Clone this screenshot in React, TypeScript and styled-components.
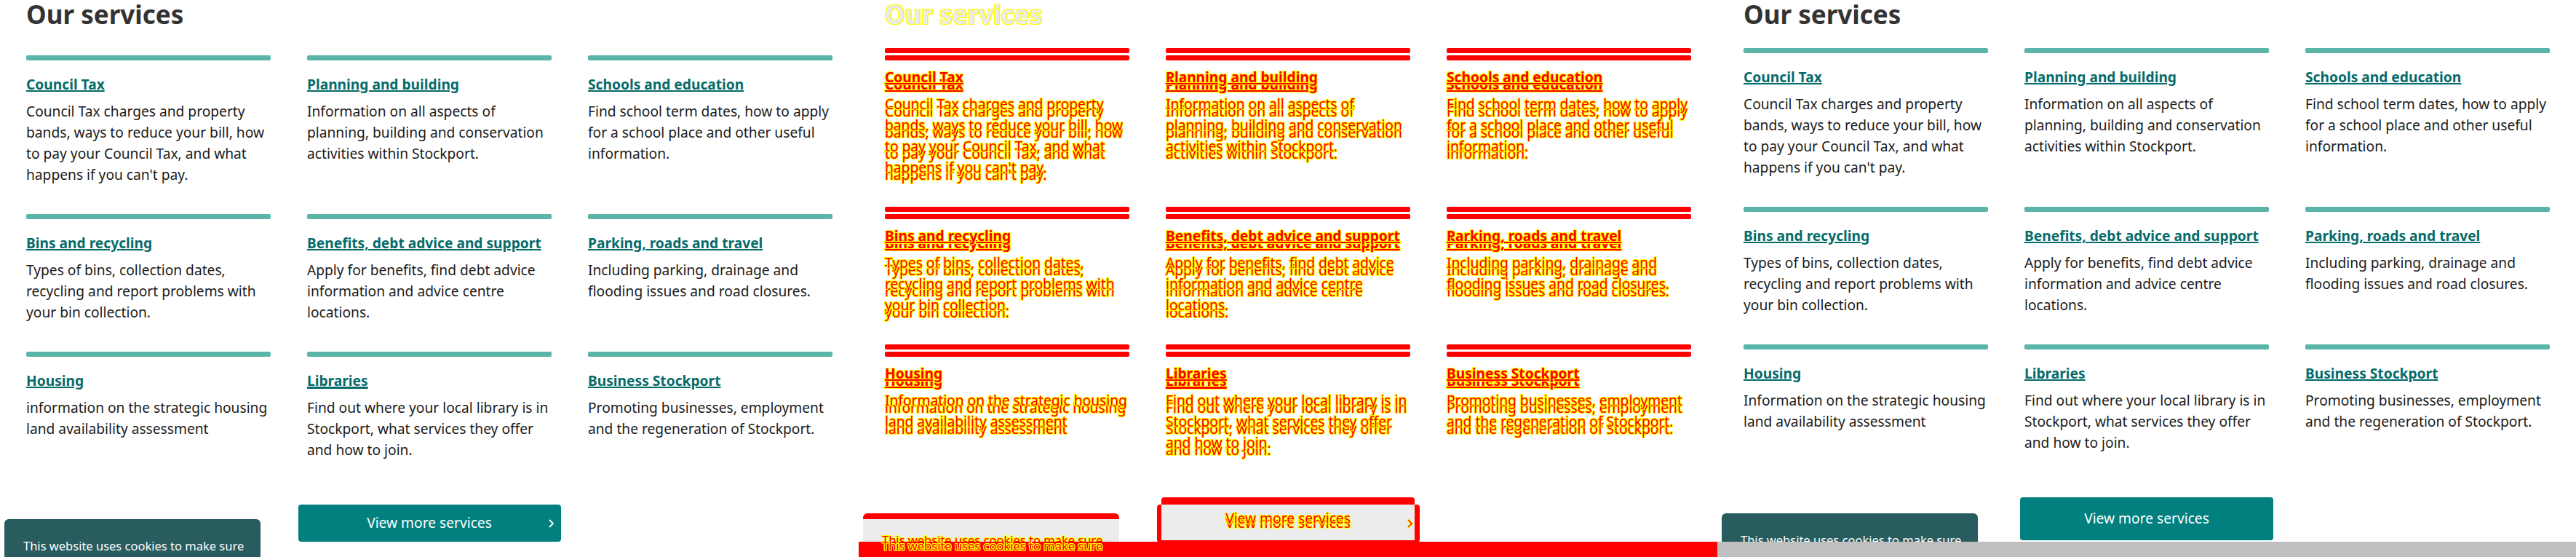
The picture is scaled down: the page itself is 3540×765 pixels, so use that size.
import styled, { createGlobalStyle, css } from "styled-components";

type Layout = "before" | "after";
type Tone = "plain" | "diff";

type Service = { title: string; text: string; hover?: boolean };

const LAYOUTS = {
  before: { gridTop: 36, btnW: 361, btnH: 51.5, cookieTop: 713, chevron: true },
  after: { gridTop: 26, btnW: 348, btnH: 59, cookieTop: 705, chevron: false },
};

const services = (layout: Layout): Service[] => [
  {
    title: "Council Tax",
    text: "Council Tax charges and property bands, ways to reduce your bill, how to pay your Council Tax, and what happens if you can't pay.",
  },
  {
    title: "Planning and building",
    text: "Information on all aspects of planning, building and conservation activities within Stockport.",
  },
  {
    title: "Schools and education",
    text: "Find school term dates, how to apply for a school place and other useful information.",
  },
  {
    title: "Bins and recycling",
    text: "Types of bins, collection dates, recycling and report problems with your bin collection.",
  },
  {
    title: "Benefits, debt advice and support",
    text: "Apply for benefits, find debt advice information and advice centre locations.",
  },
  {
    title: "Parking, roads and travel",
    text: "Including parking, drainage and flooding issues and road closures.",
  },
  {
    title: "Housing",
    text:
      (layout === "before" ? "information" : "Information") +
      " on the strategic housing land availability assessment",
  },
  {
    title: "Libraries",
    text: "Find out where your local library is in Stockport, what services they offer and how to join.",
    hover: layout === "before",
  },
  {
    title: "Business Stockport",
    text: "Promoting businesses, employment and the regeneration of Stockport.",
  },
];

const GlobalStyle = createGlobalStyle`
  html, body {
    margin: 0;
    padding: 0;
    background: #fff;
  }
  body {
    font-family: "Noto Sans", "Open Sans", sans-serif;
  }
`;

const yellowEdge = css`
  text-shadow: 1px 0 #ffff00, -1px 0 #ffff00, 0 1px #ffff00, 0 -1px #ffff00,
    1px 1px #ffff00, -1px -1px #ffff00, 1px -1px #ffff00, -1px 1px #ffff00;
`;

// red glyph with yellow anti-alias edge, like a pixel diff
const diffInk = css`
  color: #ff0000;
  ${yellowEdge}
`;

const Strip = styled.div`
  display: flex;
  width: 3540px;
  height: 765px;
  overflow: hidden;
`;

const Panel = styled.div`
  position: relative;
  flex: none;
  width: 1180px;
  height: 765px;
  overflow: hidden;
  background: #fff;
  display: flex;
  flex-direction: column;
`;

const Viewport = styled.div<{ $clip?: boolean }>`
  position: relative;
  flex: none;
  height: ${(p) => (p.$clip ? "744px" : "765px")};
  overflow: hidden;
`;

const AfterOverlay = styled.div`
  position: absolute;
  top: 0;
  left: 0;
  width: 1180px;
  height: 744px;
  overflow: hidden;
`;

const BottomBar = styled.div`
  flex: none;
  height: 21px;
  background: #bfbfbf;
`;

const Page = styled.div`
  display: flex;
  flex-direction: column;
  padding: 0 36px;
`;

const Heading = styled.h2<{ $tone: Tone }>`
  margin: 0;
  font-size: 35px;
  line-height: 40px;
  font-weight: 700;
  color: #333333;
  ${(p) =>
    p.$tone === "diff" &&
    css`
      color: #ebebeb;
      ${yellowEdge}
    `}
`;

const Grid = styled.div<{ $top: number }>`
  display: grid;
  grid-template-columns: repeat(3, 336px);
  column-gap: 50px;
  margin-top: ${(p) => p.$top}px;
`;

const Card = styled.div`
  padding-bottom: 39.5px;
`;

const Rule = styled.div<{ $tone: Tone }>`
  height: 7px;
  border-radius: 2px;
  background: ${(p) => (p.$tone === "diff" ? "#ff0000" : "#5ab5a8")};
`;

const CardTitle = styled.h3`
  margin: 19px 0 0;
  font-size: 19.2px;
  line-height: 28.8px;
  font-weight: 700;
`;

const CardLink = styled.a<{ $tone: Tone; $hover?: boolean }>`
  color: #066b6a;
  text-decoration: underline;
  text-decoration-thickness: ${(p) => (p.$hover ? "3px" : "2px")};
  text-underline-offset: 1px;
  ${(p) => p.$tone === "diff" && diffInk}
`;

const CardText = styled.p<{ $tone: Tone }>`
  margin: 8.5px 0 0;
  font-size: 19.2px;
  line-height: 28.8px;
  color: #1b1b1b;
  ${(p) => p.$tone === "diff" && diffInk}
`;

const MoreButton = styled.a<{ $tone: Tone; $w: number; $h: number }>`
  position: relative;
  align-self: center;
  margin-top: 20.6px;
  width: ${(p) => p.$w}px;
  height: ${(p) => p.$h}px;
  display: flex;
  align-items: center;
  justify-content: center;
  border-radius: 4px;
  background: #027f7f;
  color: #ffffff;
  font-size: 19.2px;
  line-height: 28.8px;
  text-decoration: none;
  ${(p) =>
    p.$tone === "diff" &&
    css`
      background: transparent;
      ${diffInk}
    `}
`;

const ChevronBox = styled.svg`
  position: absolute;
  right: 9px;
  top: 50%;
  margin-top: -6px;
`;

const CookieBar = styled.div<{ $tone: Tone; $top: number }>`
  position: absolute;
  left: 6px;
  top: ${(p) => p.$top}px;
  width: 352px;
  box-sizing: border-box;
  padding: 24px 14px 24px 26px;
  border-radius: 6px 6px 0 0;
  background: #285c5f;
  color: #ffffff;
  font-size: 16.5px;
  line-height: 25px;
  ${(p) =>
    p.$tone === "diff" &&
    css`
      background: transparent;
      ${diffInk}
    `}
`;

const DiffMarks = styled.div`
  position: absolute;
  inset: 0;
`;

const Mark = styled.div<{ $x: number; $y: number; $w: number; $h: number; $c: string; $r?: string }>`
  position: absolute;
  left: ${(p) => p.$x}px;
  top: ${(p) => p.$y}px;
  width: ${(p) => p.$w}px;
  height: ${(p) => p.$h}px;
  background: ${(p) => p.$c};
  border-radius: ${(p) => p.$r ?? "0"};
`;

function Chevron({ tone }: { tone: Tone }) {
  return (
    <ChevronBox width="9" height="12" viewBox="0 0 9 12">
      {tone === "diff" && (
        <polyline points="2,1 7,6 2,11" fill="none" stroke="#ffff00" strokeWidth="3.4" />
      )}
      <polyline
        points="2,1 7,6 2,11"
        fill="none"
        stroke={tone === "diff" ? "#ff0000" : "#ffffff"}
        strokeWidth={tone === "diff" ? 1.4 : 1.8}
      />
    </ChevronBox>
  );
}

function ServicesPage({ layout, tone }: { layout: Layout; tone: Tone }) {
  const cfg = LAYOUTS[layout];
  return (
    <Page>
      <Heading $tone={tone}>Our services</Heading>
      <Grid $top={cfg.gridTop}>
        {services(layout).map((s) => (
          <Card key={s.title}>
            <Rule $tone={tone} />
            <CardTitle>
              <CardLink href="#" $tone={tone} $hover={s.hover}>
                {s.title}
              </CardLink>
            </CardTitle>
            <CardText $tone={tone}>{s.text}</CardText>
          </Card>
        ))}
      </Grid>
      <MoreButton href="#" $tone={tone} $w={cfg.btnW} $h={cfg.btnH}>
        View more services
        {cfg.chevron && <Chevron tone={tone} />}
      </MoreButton>
      <CookieBar $tone={tone} $top={cfg.cookieTop}>
        This website uses cookies to make sure you get the best experience on our website.
      </CookieBar>
    </Page>
  );
}

function DiffPanel() {
  return (
    <Panel>
      <DiffMarks>
        <Mark $x={409.5} $y={693} $w={361} $h={51.5} $c="#ff0000" $r="4px" />
        <Mark $x={416} $y={683} $w={348} $h={59} $c="#ff0000" $r="4px" />
        <Mark $x={416} $y={693} $w={348} $h={49} $c="#ececec" />
        <Mark $x={6} $y={705} $w={352} $h={60} $c="#ff0000" $r="6px 6px 0 0" />
        <Mark $x={6} $y={713} $w={352} $h={31} $c="#ececec" />
        <Mark $x={0} $y={744} $w={1180} $h={21} $c="#ff0000" />
      </DiffMarks>
      <Viewport>
        <ServicesPage layout="before" tone="diff" />
      </Viewport>
      <AfterOverlay>
        <ServicesPage layout="after" tone="diff" />
      </AfterOverlay>
    </Panel>
  );
}

export default function App() {
  return (
    <>
      <GlobalStyle />
      <Strip>
        <Panel>
          <Viewport>
            <ServicesPage layout="before" tone="plain" />
          </Viewport>
        </Panel>
        <DiffPanel />
        <Panel>
          <Viewport $clip>
            <ServicesPage layout="after" tone="plain" />
          </Viewport>
          <BottomBar />
        </Panel>
      </Strip>
    </>
  );
}
